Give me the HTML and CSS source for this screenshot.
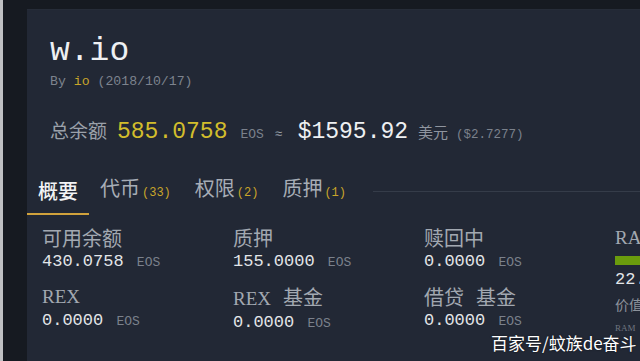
FILE: index.html
```html
<!DOCTYPE html>
<html lang="zh">
<head>
<meta charset="utf-8">
<link rel="stylesheet" href="styles.css">
</head>
<body>
<div class="page">
  <div class="panel">
    <div class="head">
      <h1 class="title">w.io</h1>
      <div class="byline">By <span class="gold">io</span> (2018/10/17)</div>
      <div class="total">
        <span class="total-label">总余额</span>
        <span class="total-eos">585.0758</span>
        <span class="unit">EOS</span>
        <span class="approx">≈</span>
        <span class="total-usd">$1595.92</span>
        <span class="usd-label">美元</span>
        <span class="price">($2.7277)</span>
      </div>
    </div>
    <div class="tabs">
      <div class="tab active">概要</div>
      <div class="tab">代币<span class="count">(33)</span></div>
      <div class="tab">权限<span class="count">(2)</span></div>
      <div class="tab">质押<span class="count">(1)</span></div>
      <div class="tab-line"></div>
    </div>
    <div class="stats">
      <div class="stat">
        <div class="label">可用余额</div>
        <div class="value">430.0758 <span class="unit">EOS</span></div>
      </div>
      <div class="stat">
        <div class="label">质押</div>
        <div class="value">155.0000 <span class="unit">EOS</span></div>
      </div>
      <div class="stat">
        <div class="label">赎回中</div>
        <div class="value">0.0000 <span class="unit">EOS</span></div>
      </div>
      <div class="stat ram">
        <div class="label serif">RAM</div>
        <div class="bar"><div class="bar-fill" style="width:100%"></div></div>
        <div class="value ram-value">22.</div>
        <div class="sub">价值</div>
        <div class="tiny">RAM</div>
      </div>
      <div class="stat">
        <div class="label serif">REX</div>
        <div class="value">0.0000 <span class="unit">EOS</span></div>
      </div>
      <div class="stat">
        <div class="label"><span class="serif">REX</span><span class="gap"></span>基金</div>
        <div class="value">0.0000 <span class="unit">EOS</span></div>
      </div>
      <div class="stat">
        <div class="label">借贷<span class="gap"></span>基金</div>
        <div class="value">0.0000 <span class="unit">EOS</span></div>
      </div>
    </div>
  </div>
</div>
<div class="watermark">百家号/蚊族de奋斗</div>
</body>
</html>
```
FILE: styles.css
```css
* { box-sizing: border-box; }
html, body { margin: 0; padding: 0; }
body {
  width: 640px;
  height: 361px;
  overflow: hidden;
  background: #161a21;
  border-left: 3px solid #bfc0c3;
  font-family: "Noto Sans CJK SC", "Noto Sans", sans-serif;
  position: relative;
}
.page {
  padding: 9px 0 0 24px;
}
.panel {
  background: #222835;
  border-top: 1px solid #262c38;
  height: 400px;
}
.head {
  padding: 0 0 0 23px;
}
.title {
  margin: 0;
  padding-top: 24px;
  font-family: "Liberation Mono", monospace;
  font-weight: normal;
  font-size: 33px;
  line-height: 36px;
  color: #eef0f2;
}
.byline {
  margin-top: 4px;
  font-family: "Liberation Mono", monospace;
  font-size: 13.2px;
  line-height: 16px;
  color: #7d838e;
}
.gold { color: #c9a52a; }
.total {
  margin-top: 26px;
  display: flex;
  align-items: baseline;
  white-space: nowrap;
}
.total-label {
  font-size: 19px;
  color: #9ba1aa;
  margin-right: 10px;
}
.total-eos {
  font-family: "Liberation Mono", monospace;
  font-size: 23px;
  color: #d2bd2c;
}
.unit {
  font-family: "Liberation Mono", monospace;
  font-size: 13px;
  color: #7b818c;
}
.total .unit { margin-left: 13px; }
.approx {
  font-family: "Liberation Mono", monospace;
  font-size: 13px;
  color: #9ba1aa;
  margin: 0 15px 0 11px;
}
.total-usd {
  font-family: "Liberation Mono", monospace;
  font-size: 23px;
  color: #eef0f2;
}
.usd-label {
  font-size: 15px;
  color: #8f959f;
  margin-left: 10px;
}
.price {
  font-family: "Liberation Mono", monospace;
  font-size: 12.5px;
  color: #7b818c;
  margin-left: 8px;
}
.tabs {
  margin-top: 22px;
  display: flex;
  align-items: center;
}
.tab {
  padding: 8px 11px 9px;
  font-size: 20px;
  line-height: 26px;
  color: #a7adb6;
  border-bottom: 2px solid transparent;
  white-space: nowrap;
}
.tab.active {
  color: #f2f3f5;
  font-weight: 500;
  border-bottom-color: #d0a23c;
}
.count {
  font-family: "Liberation Mono", monospace;
  font-size: 12px;
  color: #c9a52a;
  margin: 0 2px;
}
.tab-line {
  flex: 1;
  height: 1px;
  background: #353c49;
  margin-left: 14px;
  margin-bottom: 2px;
}
.stats {
  display: grid;
  grid-template-columns: repeat(4, 191px);
  row-gap: 11px;
  padding: 8px 0 0 15px;
}
.label {
  font-size: 20px;
  line-height: 26px;
  color: #a2a8b1;
  white-space: nowrap;
}
.serif {
  font-family: "Liberation Serif", serif;
  font-size: 19px;
}
.gap { display: inline-block; width: 12px; }
.value {
  margin-top: 1px;
  font-family: "Liberation Mono", monospace;
  font-size: 17px;
  line-height: 20px;
  color: #e2e5e8;
  white-space: nowrap;
}
.value .unit { margin-left: 3px; }
.ram { grid-row: span 2; }
.bar {
  margin-top: 5px;
  height: 9px;
  width: 100px;
  background: #3a414d;
}
.bar-fill { height: 100%; background: #6b9c0d; }
.ram-value { margin-top: 5px; }
.sub {
  font-size: 14px;
  line-height: 22px;
  color: #8d939c;
  margin-top: 3px;
}
.tiny {
  font-family: "Liberation Serif", serif;
  font-size: 9px;
  color: #6f7580;
  margin-top: 8px;
}
.watermark {
  position: absolute;
  left: 488px;
  top: 331px;
  font-family: "Noto Sans CJK SC", sans-serif;
  font-size: 17px;
  line-height: 24px;
  color: #ffffff;
  text-shadow: 0 0 2px rgba(0,0,0,0.6);
  white-space: nowrap;
}
```
